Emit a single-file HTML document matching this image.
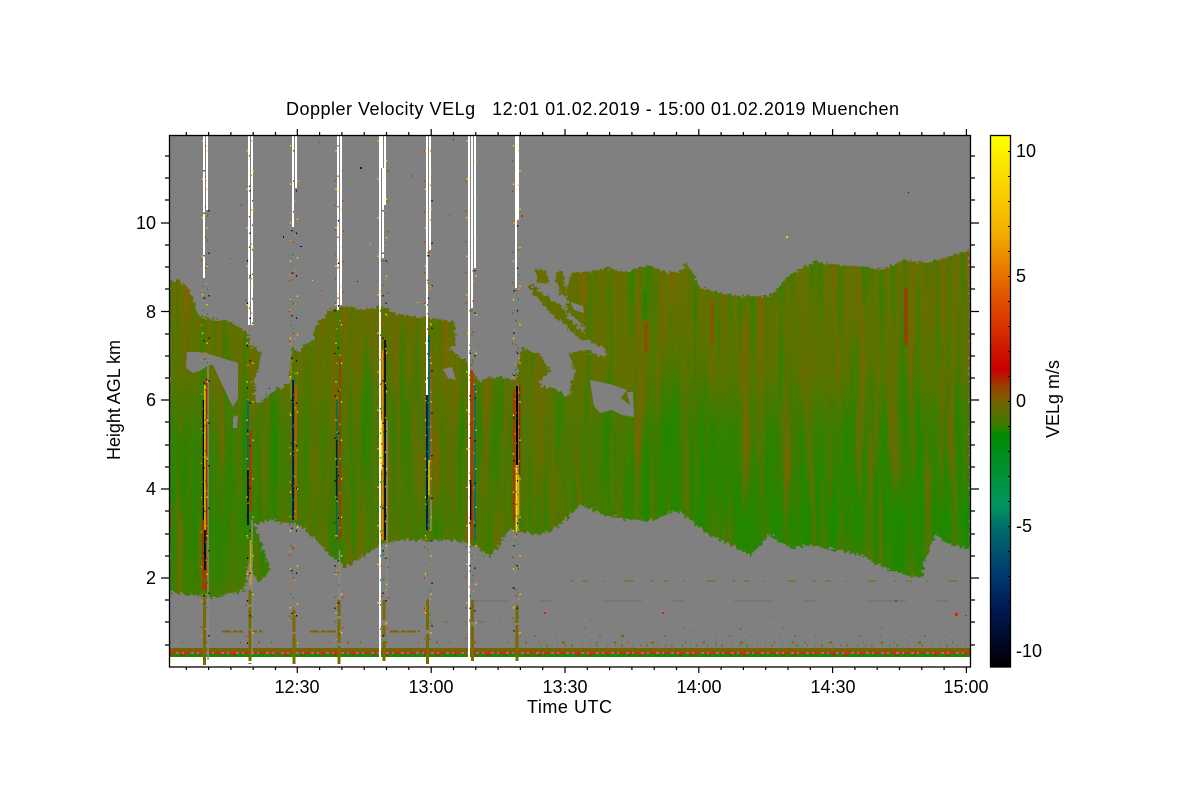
<!DOCTYPE html>
<html lang="en">
<head>
<meta charset="utf-8">
<title>Doppler Velocity VELg</title>
<style>
html,body{margin:0;padding:0;background:#fff;width:1200px;height:800px;overflow:hidden}
svg{display:block}
text{font-family:"Liberation Sans",sans-serif;font-size:18px;fill:#000;white-space:pre}
</style>
</head>
<body>
<svg width="1200" height="800" viewBox="0 0 1200 800" xmlns="http://www.w3.org/2000/svg">
<defs>
<linearGradient id="cb" gradientUnits="userSpaceOnUse" x1="0" y1="135" x2="0" y2="667">
<stop offset="0" stop-color="#ffff00"/><stop offset=".179" stop-color="#f4b000"/><stop offset=".31" stop-color="#e05000"/><stop offset=".442" stop-color="#c80000"/><stop offset=".47" stop-color="#9a3c00"/><stop offset=".498" stop-color="#7a6000"/><stop offset=".545" stop-color="#3c7a00"/><stop offset=".564" stop-color="#008a00"/><stop offset=".63" stop-color="#009030"/><stop offset=".695" stop-color="#00955f"/><stop offset=".742" stop-color="#006a6a"/><stop offset=".827" stop-color="#003a70"/><stop offset=".893" stop-color="#001850"/><stop offset=".95" stop-color="#000a28"/><stop offset="1" stop-color="#000"/>
</linearGradient>
<linearGradient id="v" gradientUnits="userSpaceOnUse" x1="0" y1="250" x2="0" y2="600">
<stop offset="0" stop-color="#667000"/><stop offset=".35" stop-color="#587400"/><stop offset=".52" stop-color="#2f8200"/><stop offset=".78" stop-color="#1c8a00"/><stop offset="1" stop-color="#3c7e00"/>
</linearGradient>
<linearGradient id="h" gradientUnits="userSpaceOnUse" x1="169" y1="0" x2="970" y2="0">
<stop offset="0" stop-color="#6a6c00" stop-opacity=".1"/><stop offset=".2" stop-color="#6a6c00" stop-opacity=".55"/><stop offset=".48" stop-color="#6a6c00" stop-opacity=".65"/><stop offset=".62" stop-color="#6a6c00" stop-opacity=".12"/><stop offset="1" stop-color="#6a6c00" stop-opacity=".08"/>
</linearGradient>
<filter id="cl" filterUnits="userSpaceOnUse" x="169" y="135" width="802" height="532" color-interpolation-filters="sRGB">
<feTurbulence type="fractalNoise" baseFrequency="0.3" numOctaves="2" seed="3" result="j"/>
<feDisplacementMap in="SourceGraphic" in2="j" scale="9" xChannelSelector="R" yChannelSelector="G" result="d"/>
<feTurbulence type="fractalNoise" baseFrequency="0.12 0.006" numOctaves="3" seed="8" result="n"/>
<feColorMatrix in="n" type="matrix" values="0 0 0 0 .52  0 0 0 0 .38  0 0 0 0 0  2.200 0 0 0 -1" result="b"/>
<feComposite in="b" in2="d" operator="in" result="bb"/>
<feTurbulence type="fractalNoise" baseFrequency="0.14 0.006" numOctaves="3" seed="21" result="m"/>
<feColorMatrix in="m" type="matrix" values="0 0 0 0 .03  0 0 0 0 .56  0 0 0 0 0  0 1.600 0 0 -.75" result="g"/>
<feComposite in="g" in2="d" operator="in" result="gg"/>
<feMerge><feMergeNode in="d"/><feMergeNode in="bb"/><feMergeNode in="gg"/></feMerge>
</filter>
<path id="body" d="M169 282L178 280 188 287 193 300 198 315 215 320 228 321 240 328 247 333 250 345 262 352 256 375 254 398 258 404 272 392 290 383 292 345 298 352 307 343 313 342 316 326 330 310 345 306 360 310 380 306 400 315 430 318 455 322 455 345 448 348 468 362 475 375 480 383 487 377 510 378 515 383 522 348 540 355 550 370 538 382 542 387 555 388 568 398 575 372 568 353 587 350 603 358 607 350 590 342 580 322 567 310 567 282 575 272 590 272 610 268 625 272 640 268 650 265 665 272 680 272 686 263 692 272 700 288 720 293 745 296 770 296 785 280 800 268 815 262 840 265 860 266 880 270 905 260 925 263 945 258 960 253 970 250 970 548 950 545 935 535 925 560 922 578 905 575 880 565 860 555 835 550 810 545 790 548 770 535 750 555 730 545 710 535 690 520 675 510 655 520 630 520 605 515 580 505 560 525 540 535 510 530 490 558 475 545 450 540 420 540 400 540 380 545 345 568 325 550 300 525 270 520 255 525 270 570 258 582 248 560 245 590 215 598 195 595 169 592Z M535 268L547 272 548 284 538 282Z M555 272L563 272 567 296 558 292Z M527 284L537 288 552 300 567 318 563 322 548 310 535 296Z M545 298L560 304 570 320 590 338 585 343 565 325 550 312Z"/>
</defs>

<rect x="169" y="135" width="802" height="522" fill="#808080"/>

<g filter="url(#cl)">
<use href="#body" fill="url(#v)"/>
<use href="#body" fill="url(#h)"/>
</g>

<!-- gray holes in the cloud -->
<g fill="#808080">
<path d="M187 352L202 352 212 355 238 363 238 398 233 407 228 397 220 380 213 365 208 365 202 370 193 373 186 368Z"/>
<path d="M233 417L238 415 237 428 233 428Z"/>
<path d="M590 380L610 384 627 390 621 398 630 405 627 392 633 392 634 417 622 415 612 410 600 413 594 406Z"/>
<path d="M570 302L583 306 584 313 574 310Z"/>
<path d="M443 369L452 367 456 380 448 378Z"/>
</g>

<!-- reddish streaks in the cloud -->
<g fill="none" stroke-width="3">
<path d="M646 322V352" stroke="#a03a00" opacity=".7"/>
<path d="M906 288V345" stroke="#a83000" stroke-width="4" opacity=".7"/>
<path d="M712 300V345" stroke="#8a5000" stroke-width="4" opacity=".7"/>
<path d="M645 290V320" stroke="#108a00" stroke-width="4" opacity=".7"/>
<path d="M170 505V530" stroke="#a04a00" stroke-width="2"/>
</g>

<!-- low level layers -->
<g fill="none">
<path d="M570 581H970" stroke="#7a6c00" stroke-dasharray="3 9 6 14 2 21 9 17"/>
<path d="M470 601H970" stroke="#6e6e6e" stroke-dasharray="40 30 12 50"/>
<path d="M540 592H970" stroke="#857a20" stroke-dasharray="1 37 2 53"/>
<path d="M222 631.500H243M248 631.500H262M310 631.500H336M390 631.500H420" stroke="#7a6500" stroke-width="2" stroke-dasharray="9 2 5 1"/>
<path d="M430 622H540" stroke="#7a6c20" stroke-dasharray="2 11 5 17"/>
<path d="M340 614H470" stroke="#7a7a50" stroke-dasharray="3 9"/>
<path d="M169 642.500H970" stroke="#7a6a00" stroke-width="2" stroke-dasharray="2 11 1 23 3 31 1 17"/>
<path d="M520 636H970" stroke="#6c7a00" stroke-width="1.500" stroke-dasharray="1 13 2 19 1 29"/>
<path d="M540 645.500H970" stroke="#6c7a00" stroke-width="2" stroke-dasharray="1 5 2 9 1 7"/>
<path d="M560 628H970" stroke="#5c8000" stroke-dasharray="1 23 2 41 1 31"/>
<rect x="169" y="648" width="802" height="4" fill="#7a6200" stroke="none"/>
<path d="M169 650H970" stroke="#8c5a00" stroke-dasharray="9 5 3 7"/>
<path d="M169 653H970" stroke="#d01a00" stroke-width="1.500" stroke-dasharray="7 3 3 2"/>
<rect x="169" y="654" width="802" height="3" fill="#1a8a00" stroke="none"/>
<path d="M169 655.500H970" stroke="#c82000" stroke-width="1.500" stroke-dasharray="3 8 5 14 2 19"/>
</g>

<!-- spikes -->
<g fill="none" stroke-width="1.600">
<path d="M208 360V660M252 520V655M339.500 550V640M387 420V600M518 385V530M431 380V530" stroke="#8a8a80" stroke-width="1.500"/>
<path d="M203.500 400V560M248 470V525" stroke="#000"/>
<path d="M205 385V540" stroke="#f4d000"/>
<path d="M206.500 378V430M206.500 430V540" stroke="#a02000"/>
<path d="M203.500 520V590M206 550V590" stroke="#d02000"/>
<path d="M205 530V570" stroke="#000"/>
<path d="M248 400V470" stroke="#006a5a"/>
<path d="M250.500 430V510" stroke="#d02000"/>
<path d="M250.500 540V585" stroke="#d8a000"/>
<path d="M293 380V520" stroke="#00205a" stroke-width="2"/>
<path d="M296 385V520" stroke="#d85000"/>
<path d="M291 360V400" stroke="#7a8a00"/>
<path d="M336.700 400V540" stroke="#006a5a"/>
<path d="M336.700 440V500" stroke="#001a50"/>
<path d="M340 358V540" stroke="#d02000"/>
<path d="M382.500 350V540" stroke="#e88000" stroke-width="2"/>
<path d="M381.500 420V470" stroke="#ffe000"/>
<path d="M385 340V540" stroke="#000"/>
<path d="M427 360V530" stroke="#002050" stroke-width="2"/>
<path d="M429 335V460" stroke="#006a6a"/>
<path d="M429 460V495" stroke="#c8c800"/>
<path d="M431 345V500" stroke="#8a5a20"/>
<path d="M472 370V540" stroke="#d02800" stroke-width="2"/>
<path d="M475 385V540" stroke="#007070"/>
<path d="M470.500 480V520" stroke="#000"/>
<path d="M514 390V522" stroke="#d02000"/>
<path d="M517 386V465" stroke="#000" stroke-width="2"/>
<path d="M516.500 465V532" stroke="#ffe000"/>
<path d="M518.500 475V515" stroke="#f4a000"/>
<path d="M519.500 385V475" stroke="#a02000"/>
</g>

<!-- olive columns near the ground -->
<g fill="none" stroke="#7a6a00" stroke-width="3">
<path d="M204.500 598V665" stroke-dasharray="30 1 20 2 14 1"/>
<path d="M250 590V664" stroke-dasharray="14 3 22 2 20 2 8 2"/>
<path d="M294 610V665" stroke-dasharray="22 2 30 1"/>
<path d="M339 600V664" stroke-dasharray="16 3 24 3 18"/>
<path d="M384 600V664" stroke-dasharray="20 5 12 4 20"/>
<path d="M427.500 600V664" stroke-dasharray="30 4 14 2 14"/>
<path d="M472.500 600V664" stroke-dasharray="22 3 36"/>
<path d="M517 605V665" stroke-dasharray="18 2 36"/>
</g>

<!-- white gaps -->
<g fill="none" stroke="#fff" stroke-width="2">
<path d="M204 135V278M207 135V210"/>
<path d="M249 135V325M252 135V325"/>
<path d="M293 135V227M296 135V188"/>
<path d="M338 135V310M341 135V305"/>
<path d="M380 135V657M382 135V168M383 168V258M385 135V205"/>
<path d="M427 135V395M430 135V250"/>
<path d="M469 135V657M472 135V308M475 135V268"/>
<path d="M516 135V288M518 135V220"/>
</g>

<!-- speckle along the spikes -->
<g fill="none" stroke-width="1.200">
<path stroke="#ffe000" stroke-dasharray="1.500 37" d="M202.500 140V350M207 150V600M247 150V600M253 170V655M290.500 145V640M297.500 180V650M336 150V640M341.500 170V650M378 140V640M386.500 160V650M425.500 150V640M431 170V650M467 140V640M476 160V650M513.500 145V640M520 170V650"/>
<path stroke="#e02000" stroke-dasharray="1.500 29" d="M205.500 145V620M201.500 260V640M249.500 155V400M246 300V650M293.500 150V640M289.500 280V640M338 145V640M343 200V640M381.500 260V640M388 170V640M428 252V340M424.500 150V640M473 270V640M466 180V640M516.500 290V640M512.500 160V640"/>
<path stroke="#000020" stroke-dasharray="1.500 41" d="M204 170V600M209 210V650M250 190V620M247.500 260V650M292 230V640M296.500 190V650M338.500 220V640M335 310V640M383 210V640M386 260V640M428.500 255V350M432 200V650M470 310V640M475 270V650M517.500 225V640M514 290V640"/>
<path stroke="#009040" stroke-dasharray="1.500 23" d="M203 285V640M207.500 215V620M249 330V640M252.500 200V640M293 230V640M291 300V640M339 315V640M335.500 180V640M383.500 260V640M380.500 310V640M427.500 255V640M430 320V640M472 310V640M470 350V640M518.500 225V640M516 295V640"/>
<path stroke="#f09000" stroke-dasharray="1.500 33" d="M206 180V640M201.500 290V640M248 330V640M251.500 140V400M295 200V640M290 240V640M340 320V640M337 190V640M385.500 210V640M381 290V640M426 400V640M430.500 150V640M469.500 310V640M474 280V640M515 295V640M519 150V640"/>
</g>

<!-- scattered dots -->
<g stroke="none">
<path fill="#001a50" d="M360 167h2v2h-2zM283 236h1v2h-1zM269 388h1v1h-1zM357 281h1v1h-1zM908 192h1v1h-1zM300 246h2v1h-2zM453 139h1v1h-1z"/>
<path fill="#e02000" d="M230 258h1v1h-1zM321 290h1v1h-1zM521 215h2v2h-2zM411 175h1v2h-1zM662 612h2v2h-2zM544 612h2v2h-2zM955 613h3v3h-3zM770 617h1v1h-1z"/>
<path fill="#ffd000" d="M312 280h1v1h-1zM370 243h1v1h-1zM786 236h2v2h-2zM417 302h1v1h-1z"/>
<path fill="#108a00" d="M241 204h1v2h-1zM319 142h1v1h-1zM449 215h1v1h-1zM895 600h2v2h-2zM965 615h2v1h-2zM622 635h2v2h-2zM590 620h1v1h-1zM740 628h1v2h-1zM690 630h1v1h-1z"/>
<path fill="#e09000" d="M196 170h1v1h-1zM260 138h1v1h-1zM368 138h1v1h-1zM280 280h1v1h-1zM660 250h1v1h-1zM890 152h1v1h-1z"/>
</g>

<!-- plot frame and ticks -->
<rect x="169.500" y="135.500" width="801" height="531.500" fill="none" stroke="#000" stroke-width="1.300"/>
<g fill="none" stroke="#000" stroke-width="1.200">
<path d="M186.300 135v-3M208.600 135v-3M230.900 135v-3M253.200 135v-3M275.500 135v-3M297.300 135v-6M319.600 135v-3M341.900 135v-3M364.200 135v-3M386.500 135v-3M408.800 135v-3M431.200 135v-6M453.500 135v-3M475.800 135v-3M498.100 135v-3M520.400 135v-3M542.700 135v-3M565 135v-6M587.300 135v-3M609.600 135v-3M631.900 135v-3M654.200 135v-3M676.500 135v-3M698.800 135v-6M721.100 135v-3M743.400 135v-3M765.700 135v-3M788 135v-3M810.300 135v-3M832.600 135v-6M854.900 135v-3M877.200 135v-3M899.500 135v-3M921.800 135v-3M944.100 135v-3M966.400 135v-6"/>
<path d="M186.300 667v3M208.600 667v3M230.900 667v3M253.200 667v3M275.500 667v3M297.300 667v6M319.600 667v3M341.900 667v3M364.200 667v3M386.500 667v3M408.800 667v3M431.200 667v6M453.500 667v3M475.800 667v3M498.100 667v3M520.400 667v3M542.700 667v3M565 667v6M587.300 667v3M609.600 667v3M631.900 667v3M654.200 667v3M676.500 667v3M698.800 667v6M721.100 667v3M743.400 667v3M765.700 667v3M788 667v3M810.300 667v3M832.600 667v6M854.900 667v3M877.200 667v3M899.500 667v3M921.800 667v3M944.100 667v3M966.400 667v6"/>
<path d="M169 156h-4M169 178h-4M169 200h-4M169 223h-8M169 245h-4M169 267h-4M169 289h-4M169 311.500h-8M169 334h-4M169 356h-4M169 378h-4M169 400h-8M169 422h-4M169 445h-4M169 467h-4M169 489h-8M169 511h-4M169 534h-4M169 556h-4M169 578h-8M169 600h-4M169 622h-4M169 645h-4"/>
<path d="M971 156h4M971 178h4M971 200h4M971 223h8M971 245h4M971 267h4M971 289h4M971 311.500h8M971 334h4M971 356h4M971 378h4M971 400h8M971 422h4M971 445h4M971 467h4M971 489h8M971 511h4M971 534h4M971 556h4M971 578h8M971 600h4M971 622h4M971 645h4"/>
</g>

<!-- colorbar -->
<rect x="990.500" y="135.500" width="20" height="531.500" fill="url(#cb)" stroke="#000" stroke-width="1.300"/>
<path fill="none" stroke="#000" stroke-width="1" d="M1010 151.500h-2M1010 176.500h-2M1010 201.500h-2M1010 226.500h-2M1010 251.500h-2M1010 276.500h-2M1010 301.500h-2M1010 326.500h-2M1010 351.500h-2M1010 376.500h-2M1010 401.500h-2M1010 426.500h-2M1010 451.500h-2M1010 476.500h-2M1010 501.500h-2M1010 526.500h-2M1010 551.500h-2M1010 576.500h-2M1010 601.500h-2M1010 626.500h-2M1010 651.500h-2"/>

<!-- text -->
<text x="286" y="115" textLength="613" lengthAdjust="spacing">Doppler Velocity VELg   12:01 01.02.2019 - 15:00 01.02.2019 Muenchen</text>

<g text-anchor="end">
<text x="156" y="229">10</text>
<text x="156" y="318">8</text>
<text x="156" y="406">6</text>
<text x="156" y="495">4</text>
<text x="156" y="584">2</text>
</g>

<g text-anchor="middle">
<text x="297" y="693">12:30</text>
<text x="431" y="693">13:00</text>
<text x="565" y="693">13:30</text>
<text x="699" y="693">14:00</text>
<text x="833" y="693">14:30</text>
<text x="966" y="693">15:00</text>
</g>

<text x="527" y="713" textLength="85" lengthAdjust="spacing">Time UTC</text>
<text transform="translate(120,460) rotate(-90)" textLength="120" lengthAdjust="spacing">Height AGL km</text>
<text transform="translate(1059,438) rotate(-90)" textLength="78" lengthAdjust="spacing">VELg m/s</text>

<text x="1016" y="157">10</text>
<text x="1016" y="282">5</text>
<text x="1016" y="407">0</text>
<text x="1016" y="532">-5</text>
<text x="1016" y="657">-10</text>
</svg>
</body>
</html>
